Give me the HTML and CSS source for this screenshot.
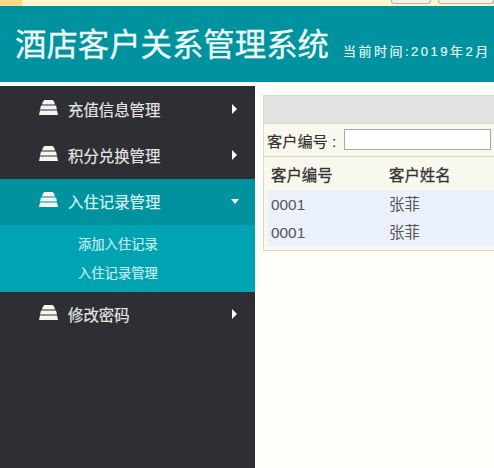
FILE: index.html
```html
<!DOCTYPE html>
<html>
<head>
<meta charset="UTF-8">
<title>酒店客户关系管理系统</title>
<link rel="stylesheet" href="styles.css">
</head>
<body>
<div class="notice">
  <div class="notice-tab"></div>
  <div class="notice-btn first-btn"></div>
  <div class="notice-btn second-btn"></div>
</div>
<div class="header">
  <span class="title">酒店客户关系管理系统</span>
  <span class="time">当前时间:2019年2月</span>
</div>
<div class="wrap">
  <div class="sidebar">
    <div class="menu-item">
      <svg class="stack" viewBox="0 0 19 15"><path d="M6 0h7q2 0 3 4.500H3q1-4.500 3-4.500zM2 5.500h15l1 4H1zM1 10.500h17l1 4.500H0z"/></svg>
      <span class="menu-text">充值信息管理</span>
      <span class="arrow-right"></span>
    </div>
    <div class="menu-item">
      <svg class="stack" viewBox="0 0 19 15"><path d="M6 0h7q2 0 3 4.500H3q1-4.500 3-4.500zM2 5.500h15l1 4H1zM1 10.500h17l1 4.500H0z"/></svg>
      <span class="menu-text">积分兑换管理</span>
      <span class="arrow-right"></span>
    </div>
    <div class="menu-item active">
      <svg class="stack" viewBox="0 0 19 15"><path d="M6 0h7q2 0 3 4.500H3q1-4.500 3-4.500zM2 5.500h15l1 4H1zM1 10.500h17l1 4.500H0z"/></svg>
      <span class="menu-text">入住记录管理</span>
      <span class="arrow-down"></span>
    </div>
    <div class="submenu">
      <div class="sub-item">添加入住记录</div>
      <div class="sub-item">入住记录管理</div>
    </div>
    <div class="menu-item">
      <svg class="stack" viewBox="0 0 19 15"><path d="M6 0h7q2 0 3 4.500H3q1-4.500 3-4.500zM2 5.500h15l1 4H1zM1 10.500h17l1 4.500H0z"/></svg>
      <span class="menu-text">修改密码</span>
      <span class="arrow-right"></span>
    </div>
  </div>
  <div class="main">
    <div class="panel">
      <div class="panel-title"></div>
      <div class="search">
        <label class="search-label">客户编号 :</label>
        <input class="search-input" type="text">
      </div>
      <div class="table">
        <div class="row head">
          <div class="col-a">客户编号</div>
          <div class="col-b">客户姓名</div>
        </div>
        <div class="row">
          <div class="col-a">0001</div>
          <div class="col-b">张菲</div>
        </div>
        <div class="row">
          <div class="col-a">0001</div>
          <div class="col-b">张菲</div>
        </div>
      </div>
    </div>
  </div>
</div>
</body>
</html>
```

FILE: styles.css
```css
* {
  margin: 0;
  padding: 0;
  box-sizing: border-box;
}

html, body {
  height: 100%;
  overflow: hidden;
}

body {
  width: 494px;
  background-color: #fff;
  font-family: "Liberation Sans", "Noto Sans CJK SC", sans-serif;
}

.notice {
  display: flex;
  height: 6px;
  background-color: #fdf6cf;
  overflow: hidden;
}

.notice-tab {
  width: 22px;
  background-color: #fbd98a;
}

.notice-btn {
  height: 4px;
  border: 1px solid #b9b3a0;
  border-top: 0;
  border-radius: 0 0 3px 3px;
  background-color: #f5f1e4;
}

.first-btn {
  width: 40px;
  margin-left: 369px;
}

.second-btn {
  width: 56px;
  margin-left: 7px;
}

.header {
  display: flex;
  align-items: baseline;
  height: 76px;
  padding: 20px 0 0 15px;
  background-color: #00929f;
  color: #fff;
  white-space: nowrap;
  overflow: hidden;
}

.title {
  font-size: 31.400px;
  line-height: 40px;
  color: #eefbfb;
  -webkit-text-stroke: 0.3px #eefbfb;
}

.time {
  margin-left: 14px;
  font-size: 13px;
  letter-spacing: 2.500px;
  color: #e6f6f6;
  -webkit-text-stroke: 0.2px #e6f6f6;
}

.wrap {
  display: flex;
  height: 386px;
  margin-top: 4px;
}

.sidebar {
  width: 255px;
  flex-shrink: 0;
  padding-top: 1px;
  background-color: #2e2f34;
}

.menu-item {
  display: flex;
  align-items: center;
  height: 46px;
  padding: 0 18px 0 39px;
  color: #e4e4e4;
  font-size: 15.400px;
  -webkit-text-stroke: 0.2px #e4e4e4;
}

.menu-item.active {
  background-color: #00939f;
  color: #d8f3f4;
  -webkit-text-stroke: 0.2px #d8f3f4;
}

.stack {
  width: 19px;
  height: 15px;
  margin-top: -5px;
  fill: #f4f4f0;
}

.menu-text {
  flex: 1;
  margin: -3px 0 0 10px;
}

.arrow-right {
  width: 0;
  height: 0;
  margin-top: -3px;
  border-left: 5px solid #fff;
  border-top: 5px solid transparent;
  border-bottom: 5px solid transparent;
}

.arrow-down {
  width: 0;
  height: 0;
  margin-top: -1px;
  margin-right: -2px;
  border-top: 5px solid #eefafa;
  border-left: 4px solid transparent;
  border-right: 4px solid transparent;
}

.submenu {
  height: 67px;
  padding: 6px 0 0 78px;
  background-color: #00a3b1;
}

.sub-item {
  height: 29px;
  line-height: 28px;
  font-size: 13.300px;
  color: #c8eef0;
  -webkit-text-stroke: 0.2px #c8eef0;
}

.main {
  flex: 1;
  min-width: 0;
  padding: 9px 0 0 8px;
  background-color: #fefefb;
  overflow: hidden;
}

.panel {
  width: 240px;
  height: 156px;
  border: 1px solid #dcd9c5;
  background-color: #f9f8ef;
}

.panel-title {
  height: 28px;
  border-bottom: 1px solid #dcd9c5;
  background-color: #e2e3e0;
}

.search {
  display: flex;
  align-items: center;
  height: 33px;
  padding-left: 3px;
  border-bottom: 1px solid #dcd9c5;
}

.search-label {
  width: 77px;
  font-size: 15.200px;
  color: #333;
  white-space: nowrap;
  -webkit-text-stroke: 0.2px #333;
}

.search-input {
  width: 147px;
  height: 21px;
  margin-top: -1px;
  border: 1px solid #a9a9a2;
  background-color: #fff;
  flex-shrink: 0;
}

.table {
  padding-left: 4px;
}

.row {
  display: flex;
  height: 28px;
  line-height: 30px;
  font-size: 15.400px;
  color: #555;
  background-color: #ebf1fa;
}

.row.head {
  height: 33px;
  line-height: 37px;
  color: #333;
  background-color: #f9f8ef;
  -webkit-text-stroke: 0.3px #333;
}

.col-a {
  width: 121px;
  padding-left: 3px;
}

.col-b {
  flex: 1;
}
```
